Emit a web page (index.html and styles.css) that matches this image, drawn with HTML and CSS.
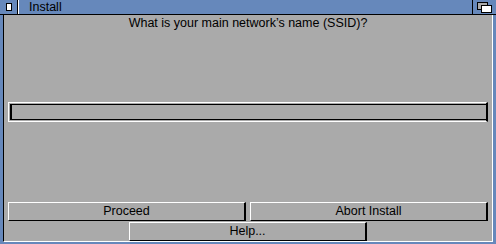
FILE: index.html
```html
<!DOCTYPE html>
<html lang="en">
<head>
    <meta charset="UTF-8">
    <title>Install</title>
    <link rel="stylesheet" href="styles.css">
</head>
<body>
    <div class="window">
        <!-- title bar -->
        <div class="titlebar">
            <div class="close-gadget"><span class="close-box"></span></div>
            <div class="title">Install</div>
            <div class="depth-gadget">
                <span class="depth-back"></span>
                <span class="depth-front"></span>
            </div>
        </div>
        <div class="frame">
            <div class="content">
                <div class="question">What is your main network’s name (SSID)?</div>
                <div class="string-gadget">
                    <div class="string-inner"></div>
                </div>
                <div class="buttons">
                    <div class="button-row">
                        <div class="button">Proceed</div>
                        <div class="button">Abort Install</div>
                    </div>
                    <div class="button-row center">
                        <div class="button">Help...</div>
                    </div>
                </div>
            </div>
        </div>
    </div>
</body>
</html>
```

FILE: styles.css
```css
:root {
    --wb-blue: #6688bb;
    --wb-gray: #aaaaaa;
}

* {
    box-sizing: border-box;
    margin: 0;
    padding: 0;
}

body {
    font-family: 'Liberation Sans', Arial, sans-serif;
    font-size: 12.5px;
    color: #000;
    background: var(--wb-blue);
}

.window {
    width: 496px;
    height: 244px;
    background: var(--wb-blue);
    display: flex;
    flex-direction: column;
}

.titlebar {
    height: 15px;
    display: flex;
    border-bottom: 1px solid #000;
}

.close-gadget {
    width: 18px;
    border-right: 1px solid #000;
    box-shadow: 1px 0 0 #fff;
    display: flex;
    justify-content: center;
    align-items: center;
}

.close-box {
    width: 6px;
    height: 8px;
    background: #fff;
    border: 1px solid #000;
}

.title {
    flex: 1;
    padding-left: 11px;
    line-height: 14px;
}

.depth-gadget {
    width: 24px;
    border-left: 1px solid #000;
    position: relative;
}

/* overlapping rectangles of the depth gadget */
.depth-back {
    position: absolute;
    left: 4px;
    top: 2px;
    width: 11px;
    height: 8px;
    background: var(--wb-gray);
    border: 1px solid #000;
}

.depth-front {
    position: absolute;
    left: 8px;
    top: 5px;
    width: 11px;
    height: 8px;
    background: #fff;
    border: 1px solid #000;
}

.frame {
    flex: 1;
    margin: 0 3px 2px 3px;
    border-left: 1px solid #000;
    border-right: 1px solid #fff;
    border-bottom: 1px solid #fff;
    background: var(--wb-gray);
    display: flex;
}

.content {
    flex: 1;
    display: flex;
    flex-direction: column;
    padding: 0 4px;
}

.question {
    text-align: center;
    line-height: 14px;
    padding-top: 1px;
}

.string-gadget {
    margin-top: 72px;
    height: 20px;
    border-top: 1px solid #fff;
    border-left: 1px solid #fff;
    border-right: 2px solid #000;
    border-bottom: 1px solid #fff;
    padding: 1px 0 0 1px;
    display: flex;
}

.string-inner {
    flex: 1;
    border-top: 1px solid #000;
    border-left: 2px solid #000;
    border-bottom: 1px solid #000;
    margin-bottom: 1px;
}

.buttons {
    margin-top: auto;
    display: flex;
    flex-direction: column;
    gap: 1px;
}

.button-row {
    display: flex;
    gap: 4px;
}

.button-row.center {
    justify-content: center;
}

.button {
    width: 238px;
    height: 19px;
    line-height: 17px;
    text-align: center;
    border-top: 1px solid #fff;
    border-left: 1px solid #fff;
    border-right: 2px solid #000;
    border-bottom: 1px solid #000;
}
```
